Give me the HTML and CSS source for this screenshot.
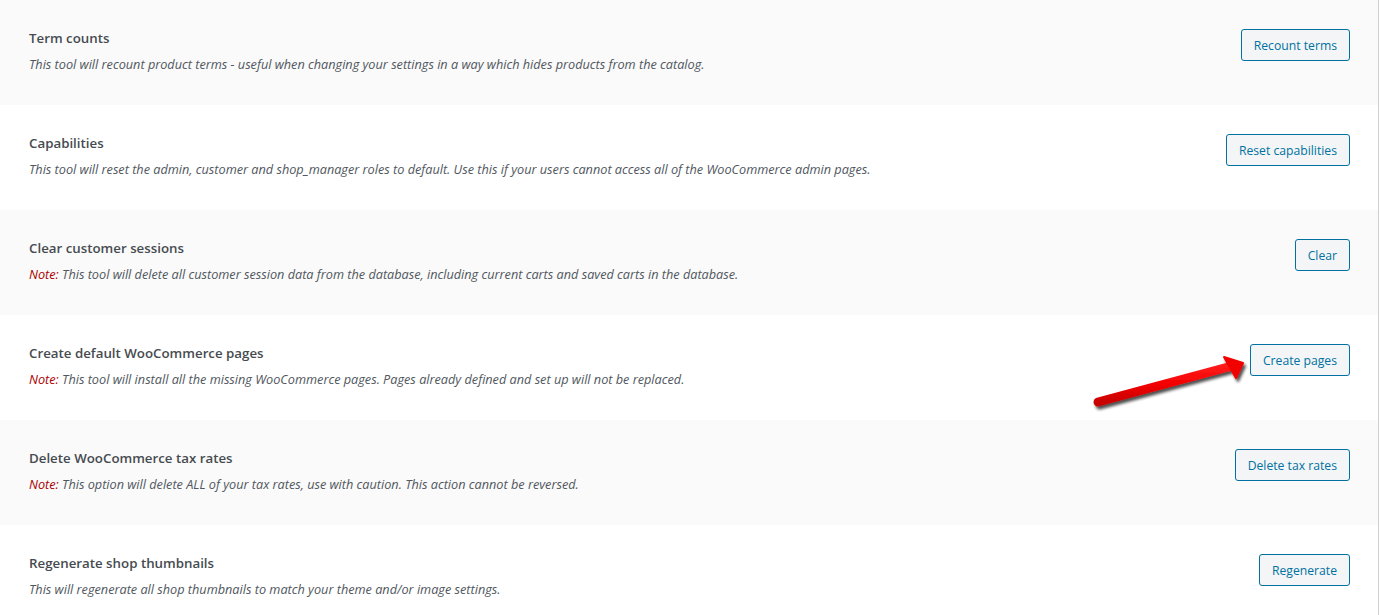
FILE: index.html
```html
<!DOCTYPE html>
<html lang="en">
<head>
<meta charset="utf-8">
<title>WooCommerce Tools</title>
<link rel="stylesheet" href="styles.css">
</head>
<body>
<div class="page">
  <div class="tools">
    <div class="row alt">
      <div class="info">
        <div class="title">Term counts</div>
        <div class="desc">This tool will recount product terms - useful when changing your settings in a way which hides products from the catalog.</div>
      </div>
      <button class="btn">Recount terms</button>
    </div>
    <div class="row">
      <div class="info">
        <div class="title">Capabilities</div>
        <div class="desc">This tool will reset the admin, customer and shop_manager roles to default. Use this if your users cannot access all of the WooCommerce admin pages.</div>
      </div>
      <button class="btn">Reset capabilities</button>
    </div>
    <div class="row alt">
      <div class="info">
        <div class="title">Clear customer sessions</div>
        <div class="desc"><span class="note">Note:</span> This tool will delete all customer session data from the database, including current carts and saved carts in the database.</div>
      </div>
      <button class="btn">Clear</button>
    </div>
    <div class="row">
      <div class="info">
        <div class="title">Create default WooCommerce pages</div>
        <div class="desc"><span class="note">Note:</span> This tool will install all the missing WooCommerce pages. Pages already defined and set up will not be replaced.</div>
      </div>
      <button class="btn">Create pages</button>
    </div>
    <div class="row alt">
      <div class="info">
        <div class="title">Delete WooCommerce tax rates</div>
        <div class="desc"><span class="note">Note:</span> This option will delete ALL of your tax rates, use with caution. This action cannot be reversed.</div>
      </div>
      <button class="btn">Delete tax rates</button>
    </div>
    <div class="row">
      <div class="info">
        <div class="title">Regenerate shop thumbnails</div>
        <div class="desc">This will regenerate all shop thumbnails to match your theme and/or image settings.</div>
      </div>
      <button class="btn">Regenerate</button>
    </div>
  </div>
  <svg class="arrow" width="170" height="70" viewBox="0 0 170 70" aria-hidden="true">
    <defs>
      <linearGradient id="red" x1="0" y1="0" x2="0" y2="1">
        <stop offset="0" stop-color="#ff1a1a"/>
        <stop offset="0.5" stop-color="#f20000"/>
        <stop offset="1" stop-color="#c80000"/>
      </linearGradient>
      <filter id="shadow" x="-20%" y="-40%" width="140%" height="180%">
        <feGaussianBlur in="SourceAlpha" stdDeviation="1.6"/>
        <feOffset dx="2" dy="2.5" result="b"/>
        <feComponentTransfer><feFuncA type="linear" slope="0.7"/></feComponentTransfer>
        <feMerge><feMergeNode/><feMergeNode in="SourceGraphic"/></feMerge>
      </filter>
    </defs>
    <g filter="url(#shadow)">
      <line x1="8" y1="52" x2="138" y2="17" stroke="url(#red)" stroke-width="9" stroke-linecap="round"/>
      <polygon points="134,7 153,13 146,28" fill="#f20000" stroke="#f20000" stroke-width="2" stroke-linejoin="round"/>
    </g>
  </svg>
</div>
</body>
</html>
```

FILE: styles.css
```css
html, body {
  margin: 0;
  padding: 0;
  overflow: hidden;
  background: #fff;
}

.page {
  position: relative;
  width: 1378px;
  border-right: 1px solid #d0d0d0;
  font-family: "Open Sans", "Noto Sans", sans-serif;
}

.row {
  box-sizing: border-box;
  height: 105px;
  display: flex;
  justify-content: space-between;
  align-items: flex-start;
  padding: 28px 28px 0 29px;
  background: #fff;
}

.row.alt {
  background: #fafafa;
}

.info {
  display: flex;
  flex-direction: column;
}

.title {
  font-size: 13.3px;
  line-height: 20px;
  font-weight: 600;
  color: #464b50;
}

.desc {
  margin-top: 6px;
  font-size: 12.7px;
  line-height: 20px;
  font-style: italic;
  color: #50575e;
}

.note {
  color: #a00;
}

.btn {
  box-sizing: border-box;
  height: 32px;
  margin-top: 1px;
  padding: 1px 12px 0;
  font-family: inherit;
  font-size: 12.2px;
  line-height: 29px;
  color: #0071a1;
  background: #f3f5f6;
  border: 1px solid #0071a1;
  border-radius: 3px;
  cursor: pointer;
  white-space: nowrap;
}

.arrow {
  position: absolute;
  left: 1090px;
  top: 350px;
}
```
